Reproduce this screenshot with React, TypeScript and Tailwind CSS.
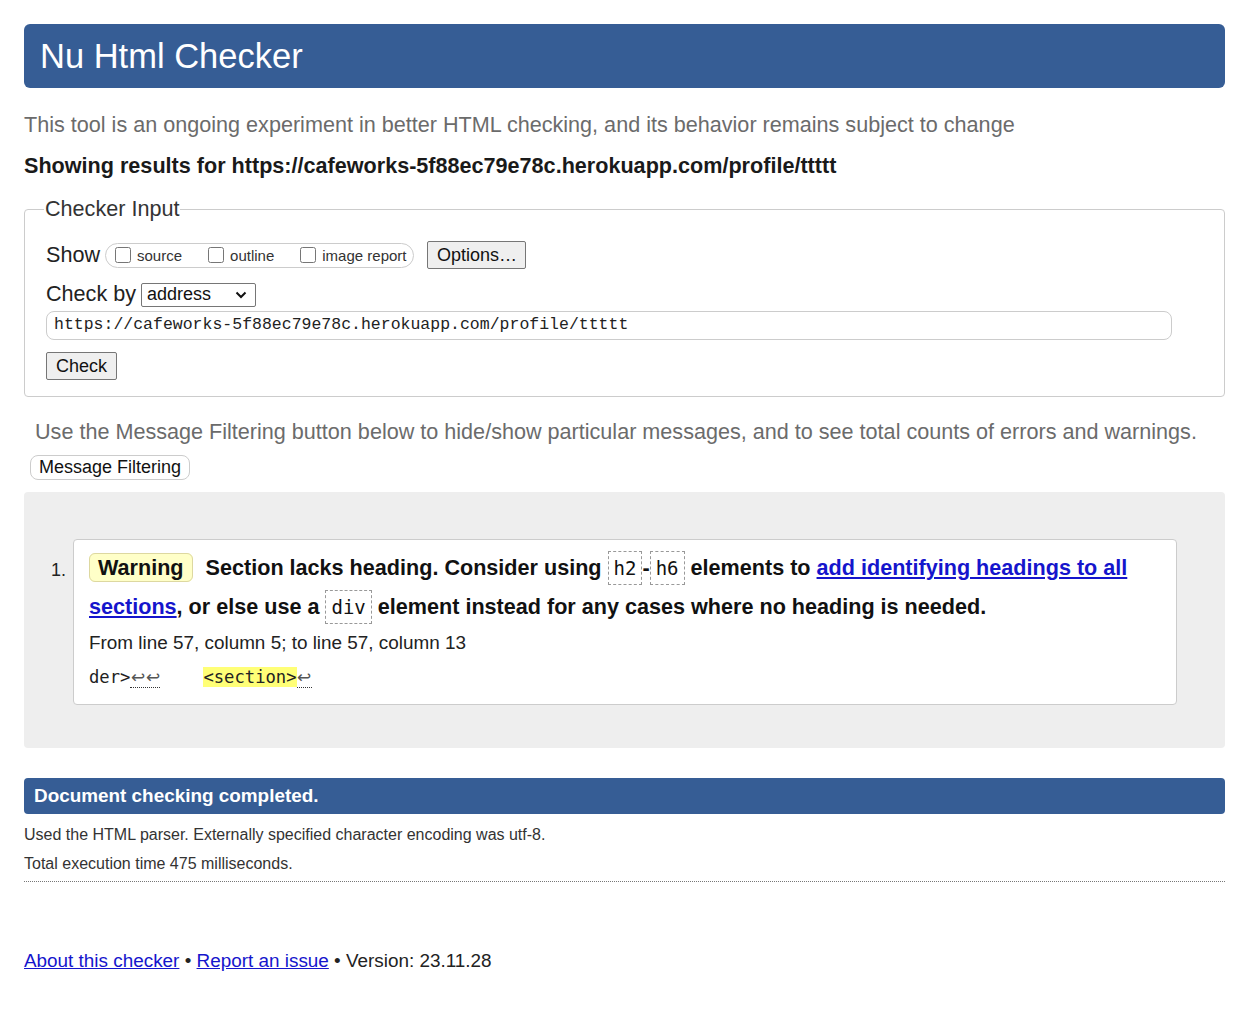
import React from "react";

const sans = { fontFamily: '"Liberation Sans", Arial, sans-serif' };
const mono = { fontFamily: '"DejaVu Sans Mono", "Liberation Mono", monospace' };

function Ret() {
  return (
    <span className="inline-block w-[15px] text-center text-[17px] text-[#555]" style={sans}>
      ↩
    </span>
  );
}

function Code({ children }: { children: React.ReactNode }) {
  return (
    <code
      className="border border-dashed border-[#999] px-[5px] py-[5px] text-[19px] font-normal"
      style={mono}
    >
      {children}
    </code>
  );
}

export default function App() {
  return (
    <div className="min-h-[1012px] bg-white px-[24px] pt-[24px] text-[#222]" style={sans}>
      <h1 className="h-[64px] rounded-[6px] bg-[#365d95] pl-[16px] text-[34.5px] leading-[64px] text-white">
        Nu Html Checker
      </h1>
      <p className="mt-[21px] text-[21.6px] leading-[32px] text-[#6b6b6b]">
        This tool is an ongoing experiment in better HTML checking, and its behavior remains subject to change
      </p>
      <p className="mt-[10px] text-[21.6px] font-bold leading-[30px] text-[#1a1a1a]">
        Showing results for https://cafeworks-5f88ec79e78c.herokuapp.com/profile/ttttt
      </p>

      <fieldset className="mt-[16px] rounded-[4px] border border-[#ccc] px-[21px] pb-[16px] pt-[18px]">
        <legend className="ml-[-2px] px-[1px] text-[21.6px] leading-[24px] text-[#333]">Checker Input</legend>
        <div className="flex items-center">
          <span className="text-[21.6px] text-[#222]">Show</span>
          <div className="ml-[5px] flex h-[25px] items-center rounded-full border border-[#ccc] pl-[9px] pr-[7px] text-[15px] text-[#333]">
            <label className="flex items-center">
              <input type="checkbox" className="m-0 h-[16px] w-[16px]" />
              <span className="ml-[6px] mt-[3px]">source</span>
            </label>
            <label className="ml-[26px] flex items-center">
              <input type="checkbox" className="m-0 h-[16px] w-[16px]" />
              <span className="ml-[6px] mt-[3px]">outline</span>
            </label>
            <label className="ml-[26px] flex items-center">
              <input type="checkbox" className="m-0 h-[16px] w-[16px]" />
              <span className="ml-[6px] mt-[3px]">image report</span>
            </label>
          </div>
          <button className="ml-[13px] h-[28px] w-[99px] rounded-[2px] border border-[#767676] bg-[#efefef] text-[18px] text-[#111]">
            Options…
          </button>
        </div>
        <div className="mt-[7px] flex items-center gap-[5px]">
          <span className="text-[21.6px] text-[#222]">Check by</span>
          <div className="flex h-[24px] w-[115px] items-center justify-between rounded-[2px] border border-[#767676] pl-[5px] pr-[8px] text-[18px] text-[#111]">
            <span>address</span>
            <svg width="12" height="8" viewBox="0 0 12 8">
              <path d="M1.5 1.5 L6 6 L10.5 1.5" fill="none" stroke="#111" strokeWidth="2" />
            </svg>
          </div>
        </div>
        <div
          className="mt-[0px] flex h-[29px] w-[1126px] items-center rounded-[8px] border border-[#ccc] px-[7px] text-[16.5px] text-[#222]"
          style={{ fontFamily: '"Liberation Mono", "DejaVu Sans Mono", monospace' }}
        >
          https://cafeworks-5f88ec79e78c.herokuapp.com/profile/ttttt
        </div>
        <button className="mt-[12px] h-[28px] w-[71px] rounded-[2px] border border-[#767676] bg-[#efefef] text-[18px] text-[#111]">
          Check
        </button>
      </fieldset>

      <p className="mt-[20px] pl-[11px] text-[21.6px] leading-[30px] text-[#6b6b6b]">
        Use the Message Filtering button below to hide/show particular messages, and to see total counts of errors and warnings.
      </p>
      <button className="ml-[6px] mt-[8px] h-[25px] rounded-[8px] border border-[#ccc] bg-white px-[8px] text-[18px] leading-[22px] text-[#111]">
        Message Filtering
      </button>

      <div className="mt-[12px] rounded-[4px] bg-[#eeeeee] pb-[43px] pl-[27px] pr-[48px] pt-[47px]">
        <div className="flex items-start">
          <span className="w-[22px] pt-[18px] text-[18px] text-[#222]">1.</span>
          <div className="flex-1 rounded-[4px] border border-[#ccc] bg-white pb-[14px] pl-[15px] pr-[16px] pt-[9px]">
            <div className="text-[21.6px] font-bold leading-[38.5px] text-[#111]">
              <span className="rounded-[6px] border border-[#ddd8a0] bg-[#ffffc8] px-[8px] py-[1px]">Warning</span>
              <span className="ml-[13px]">Section lacks heading. Consider using </span>
              <Code>h2</Code>-<Code>h6</Code> elements to{" "}
              <a className="text-[#1515cc] underline" href="#">
                add identifying headings to all sections
              </a>
              , or else use a <Code>div</Code> element instead for any cases where no heading is needed.
            </div>
            <p className="mt-[4px] text-[18.9px] leading-[26px] text-[#222]">
              From line 57, column 5; to line 57, column 13
            </p>
            <p className="mt-[9px] whitespace-pre text-[17.2px] leading-[24px] text-[#222]" style={mono}>
              der&gt;
              <span className="border-b border-dotted border-[#333]">
                <Ret />
                <Ret />
              </span>
              <span className="inline-block w-[43px]" />
              <span className="bg-[#ffff77]">&lt;section&gt;</span>
              <span className="border-b border-dotted border-[#333]">
                <Ret />
              </span>
            </p>
          </div>
        </div>
      </div>

      <div className="mt-[30px] h-[36px] rounded-[4px] bg-[#365d95] pl-[10px] text-[18.9px] font-bold leading-[36px] text-white">
        Document checking completed.
      </div>
      <p className="mt-[10px] text-[16px] leading-[22px] text-[#333]">
        Used the HTML parser. Externally specified character encoding was utf-8.
      </p>
      <p className="mt-[7px] text-[16px] leading-[22px] text-[#333]">Total execution time 475 milliseconds.</p>
      <div className="mt-[6px] border-t border-dotted border-[#777]" />

      <p className="mt-[66px] text-[18.9px] leading-[26px] text-[#222]">
        <a className="text-[#1515cc] underline" href="#">
          About this checker
        </a>{" "}
        •{" "}
        <a className="text-[#1515cc] underline" href="#">
          Report an issue
        </a>{" "}
        • Version: 23.11.28
      </p>
    </div>
  );
}
